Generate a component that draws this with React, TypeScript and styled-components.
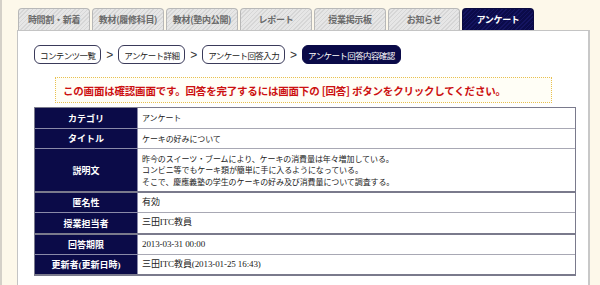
import React from "react";
import styled, { createGlobalStyle } from "styled-components";

const Global = createGlobalStyle`
  html, body { margin: 0; padding: 0; background: #fdf8ea; }
  body { font-family: "Noto Sans CJK JP", "Noto Sans", sans-serif; }
`;

const Page = styled.div`
  width: 600px;
  height: 285px;
  overflow: hidden;
  box-sizing: border-box;
  border-left: 2px solid #d4d0c8;
  padding: 8px 0 0 15px;
  display: flex;
  flex-direction: column;
`;

const TabBar = styled.div`
  display: flex;
  gap: 2px;
  padding-left: 1px;
  height: 22px;
  position: relative;
  z-index: 1;
`;

const Tab = styled.div<{ $active?: boolean }>`
  width: 72px;
  height: 22px;
  box-sizing: border-box;
  border: 1px solid ${(p) => (p.$active ? "#0a0a40" : "#b8b8b8")};
  border-bottom: none;
  border-radius: 4px 4px 0 0;
  display: flex;
  align-items: center;
  justify-content: center;
  font-size: 9px;
  font-weight: bold;
  letter-spacing: -0.3px;
  color: ${(p) => (p.$active ? "#ffffff" : "#6a6a6a")};
  background: ${(p) =>
    p.$active
      ? "repeating-linear-gradient(-45deg, #141460 0 1px, #0b0b4a 1px 3px)"
      : "repeating-linear-gradient(-45deg, #d6d6d6 0 1px, #e6e6e6 1px 3px)"};
`;

const Panel = styled.div`
  width: 573px;
  flex: 1;
  box-sizing: border-box;
  background: #ffffff;
  border: 1px solid #c4c4c4;
  border-right: 2px solid #c8c8c8;
  border-bottom: none;
  padding: 14px 0 0 16px;
  display: flex;
  flex-direction: column;
`;

const Crumbs = styled.div`
  display: flex;
  align-items: center;
  gap: 5px;
  height: 19px;
`;

const Crumb = styled.div<{ $active?: boolean }>`
  height: 19px;
  box-sizing: border-box;
  padding: 0 5px;
  border: 1.5px solid ${(p) => (p.$active ? "#0a0a48" : "#3a3a5a")};
  border-radius: 6px;
  display: flex;
  align-items: center;
  font-size: 8.5px;
  letter-spacing: -0.6px;
  color: ${(p) => (p.$active ? "#ffffff" : "#222")};
  background: ${(p) => (p.$active ? "#0a0a48" : "#ffffff")};
`;

const Sep = styled.span`
  font-size: 12px;
  color: #333;
  font-family: "Liberation Sans", sans-serif;
`;

const Notice = styled.div`
  margin: 13px 0 0 21px;
  width: 497px;
  height: 26px;
  box-sizing: border-box;
  border: 1px dotted #e8c050;
  background: #fffef6;
  display: flex;
  align-items: center;
  padding-left: 7px;
  color: #cc1010;
  font-size: 10.5px;
  font-weight: bold;
  letter-spacing: -0.2px;
`;

const Table = styled.div`
  margin-top: 4px;
  width: 542px;
  box-sizing: border-box;
  border: 1.5px solid #7a7a8c;
  border-bottom: 2px solid #7a7a8c;
  display: grid;
  grid-template-columns: 103px 1fr;
`;

const Head = styled.div<{ $serif?: boolean; $h?: number; $thick?: boolean; $first?: boolean }>`
  height: ${(p) => p.$h ?? 20}px;
  box-sizing: border-box;
  background: #0b0b48;
  color: #fff;
  font-weight: bold;
  font-size: 9px;
  display: flex;
  align-items: center;
  justify-content: center;
  border-top: ${(p) => (p.$first ? "none" : p.$thick ? "2px solid #7a7a8c" : "1px solid #8a8aa8")};
  border-right: 1px solid #8a8aa8;
  font-family: ${(p) =>
    p.$serif ? `"Liberation Serif", "Noto Sans CJK JP", serif` : `"Noto Sans CJK JP", sans-serif`};
`;

const Cell = styled.div<{ $serif?: boolean; $h?: number; $thick?: boolean; $first?: boolean }>`
  height: ${(p) => p.$h ?? 20}px;
  box-sizing: border-box;
  color: #222;
  font-size: ${(p) => (p.$serif ? 9 : 8)}px;
  line-height: 11.5px;
  display: flex;
  flex-direction: column;
  justify-content: center;
  padding-left: 4px;
  border-top: ${(p) => (p.$first ? "none" : p.$thick ? "2px solid #7a7a8c" : "1px solid #a8a8b4")};
  letter-spacing: -0.1px;
  font-family: ${(p) =>
    p.$serif ? `"Liberation Serif", "Noto Sans CJK JP", serif` : `"Noto Sans CJK JP", sans-serif`};
`;

const tabs = ["時間割・新着", "教材(履修科目)", "教材(塾内公開)", "レポート", "授業掲示板", "お知らせ", "アンケート"];

type Row = { h: string; v: React.ReactNode; height?: number; serif?: boolean; thick?: boolean };

const rows: Row[] = [
  { h: "カテゴリ", v: "アンケート" },
  { h: "タイトル", v: "ケーキの好みについて" },
  {
    h: "説明文",
    height: 43,
    v: (
      <>
        <span>昨今のスイーツ・ブームにより、ケーキの消費量は年々増加している。</span>
        <span>コンビニ等でもケーキ類が簡単に手に入るようになっている。</span>
        <span>そこで、慶應義塾の学生のケーキの好み及び消費量について調査する。</span>
      </>
    ),
  },
  { h: "匿名性", v: "有効", serif: true, thick: true, height: 21 },
  { h: "授業担当者", v: "三田ITC教員", serif: true, height: 21 },
  { h: "回答期限", v: "2013-03-31 00:00", serif: true, thick: true, height: 21 },
  { h: "更新者(更新日時)", v: "三田ITC教員(2013-01-25 16:43)", serif: true, height: 20 },
];

export default function App() {
  return (
    <>
      <Global />
      <Page>
        <TabBar>
          {tabs.map((t, i) => (
            <Tab key={t} $active={i === tabs.length - 1}>
              {t}
            </Tab>
          ))}
        </TabBar>
        <Panel>
          <Crumbs>
            <Crumb>コンテンツ一覧</Crumb>
            <Sep>&gt;</Sep>
            <Crumb>アンケート詳細</Crumb>
            <Sep>&gt;</Sep>
            <Crumb>アンケート回答入力</Crumb>
            <Sep>&gt;</Sep>
            <Crumb $active>アンケート回答内容確認</Crumb>
          </Crumbs>
          <Notice>この画面は確認画面です。回答を完了するには画面下の [回答] ボタンをクリックしてください。</Notice>
          <Table>
            {rows.map((r, i) => (
              <React.Fragment key={r.h}>
                <Head $h={r.height} $serif={r.serif} $thick={r.thick} $first={i === 0}>
                  {r.h}
                </Head>
                <Cell $h={r.height} $serif={r.serif} $thick={r.thick} $first={i === 0}>
                  {r.v}
                </Cell>
              </React.Fragment>
            ))}
          </Table>
        </Panel>
      </Page>
    </>
  );
}
